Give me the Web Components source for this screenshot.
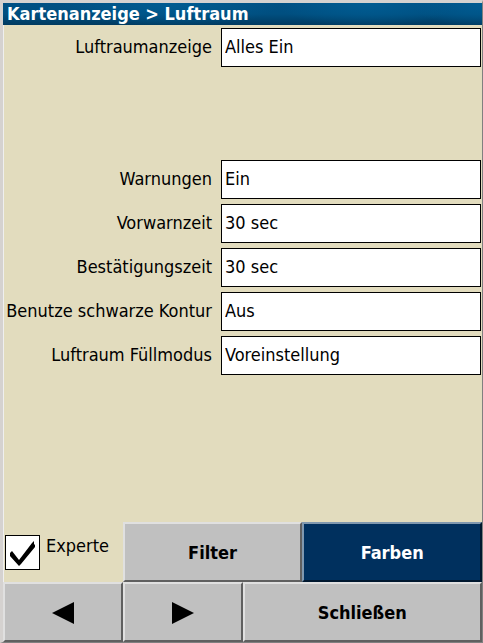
<!DOCTYPE html>
<html lang="de">
<head>
<meta charset="utf-8">
<meta name="viewport" content="width=device-width, initial-scale=1">
<title>Kartenanzeige &gt; Luftraum</title>
<style>
body { margin: 0; font: 18px/20px "DejaVu Sans Condensed", "DejaVu Sans", sans-serif; font-stretch: condensed; color: #000; }
</style>
</head>
<body>
<settings-dialog heading="Kartenanzeige &gt; Luftraum">
  <settings-row label="Luftraumanzeige" value="Alles Ein"></settings-row>
  <settings-row class="spare"></settings-row>
  <settings-row class="spare"></settings-row>
  <settings-row label="Warnungen" value="Ein"></settings-row>
  <settings-row label="Vorwarnzeit" value="30 sec"></settings-row>
  <settings-row label="Bestätigungszeit" value="30 sec"></settings-row>
  <settings-row label="Benutze schwarze Kontur" value="Aus"></settings-row>
  <settings-row label="Luftraum Füllmodus" value="Voreinstellung"></settings-row>
  <expert-toggle slot="tools">Experte</expert-toggle>
  <panel-button slot="tools">Filter</panel-button>
  <panel-button slot="tools" focused>Farben</panel-button>
  <panel-button slot="nav" label="Zurück"><svg width="22" height="22" viewBox="0 0 22 22"><path d="M22 0v22L0 11z"/></svg></panel-button>
  <panel-button slot="nav" label="Weiter"><svg width="22" height="22" viewBox="0 0 22 22"><path d="M0 0v22L22 11z"/></svg></panel-button>
  <panel-button slot="nav">Schließen</panel-button>
</settings-dialog>
<script>
class SettingsDialog extends HTMLElement {
  constructor() {
    super();
    this.attachShadow({ mode: 'open' }).innerHTML = `
      <style>
        :host { display: flex; flex-direction: column; box-sizing: border-box; min-height: 100vh;
          background: #e2dcbe; border: solid; border-width: 3px 1px 1px 3px;
          border-color: #d5d2d0 #808080 #808080 #d5d2d0; }
        h1 { margin: 0; padding: 0 4px; font: inherit; font-weight: bold; line-height: 22px; color: #fff;
          background: radial-gradient(ellipse 110px 24px at 35% 0, #005c92, transparent),
            radial-gradient(ellipse 90px 24px at 76% 0, #005c92, transparent),
            radial-gradient(ellipse 70px 24px at 100% 0, #005c92, transparent),
            linear-gradient(#005084, #004f80 50%, #003a60); }
        main { flex: 1; display: flex; flex-direction: column; gap: 5px; padding: 3px 1px; border-left: 1px solid #efefef; }
        .tools, .nav { display: grid; height: 60px; }
        .tools { grid-template-columns: 2fr 3fr 3fr; }
        .nav { grid-template-columns: 1fr 1fr 2fr; }
      </style>
      <h1></h1>
      <main><slot></slot></main>
      <div class="tools"><slot name="tools"></slot></div>
      <div class="nav"><slot name="nav"></slot></div>`;
    this.shadowRoot.querySelector('h1').textContent = this.getAttribute('heading');
  }
}
class SettingsRow extends HTMLElement {
  constructor() {
    super();
    const root = this.attachShadow({ mode: 'open' });
    root.innerHTML = `
      <style>
        :host { display: grid; grid-template-columns: 4fr 5fr; gap: 8px; align-items: center; height: 39px; }
        label { white-space: nowrap; justify-self: end; padding: 0 1px 2px 0; }
        input { box-sizing: border-box; width: 100%; height: 39px; min-width: 0; margin: 0; padding: 0 3px 2px;
          border: 1px solid #000; border-radius: 0; background: #fff; color: #000; font: inherit; outline: 0; }
      </style>`;
    if (!this.hasAttribute('label')) return;
    const label = document.createElement('label');
    label.htmlFor = 'field';
    label.textContent = this.getAttribute('label');
    const input = document.createElement('input');
    input.id = 'field';
    input.type = 'text';
    input.readOnly = true;
    input.value = this.getAttribute('value');
    root.append(label, input);
  }
}
class ExpertToggle extends HTMLElement {
  constructor() {
    super();
    this.attachShadow({ mode: 'open' }).innerHTML = `
      <style>
        :host { display: block; border-left: 1px solid #efefef; }
        label { display: flex; align-items: flex-start; gap: 6px; padding: 13px 0 0 1px; line-height: 22px; }
        .box { display: grid; width: 35px; height: 35px; }
        input, svg { grid-area: 1 / 1; }
        input { appearance: none; margin: 0; background: #fff; border: 1px solid #000; border-radius: 0; }
        svg { pointer-events: none; z-index: 1; }
        input:not(:checked) + svg { display: none; }
      </style>
      <label><span class="box"><input type="checkbox" checked><svg width="35" height="35" viewBox="0 0 35 35"><path d="M5 21V18L7 16L14 25L27 8L29 6V9L30 10V12L16 29L14 31L5 21z"/></svg></span><slot></slot></label>`;
  }
}
class PanelButton extends HTMLElement {
  constructor() {
    super();
    this.attachShadow({ mode: 'open' }).innerHTML = `
      <style>
        :host { display: grid; min-width: 0; }
        button { display: flex; align-items: center; justify-content: center; box-sizing: border-box; margin: 0; padding: 2px 0 0;
          border: 2px solid; border-color: #e0e0e0 #606060 #606060 #e0e0e0; border-radius: 0;
          background: #c0c0c0; color: #000; font: inherit; font-weight: bold; }
        :host([focused]) button { background: #00305e; color: #fff; border-color: #8098af #00182f #00182f #8098af; }
      </style>
      <button type="button"><slot></slot></button>`;
    if (this.hasAttribute('label'))
      this.shadowRoot.querySelector('button').setAttribute('aria-label', this.getAttribute('label'));
  }
}
customElements.define('settings-dialog', SettingsDialog);
customElements.define('settings-row', SettingsRow);
customElements.define('expert-toggle', ExpertToggle);
customElements.define('panel-button', PanelButton);
</script>
</body>
</html>
